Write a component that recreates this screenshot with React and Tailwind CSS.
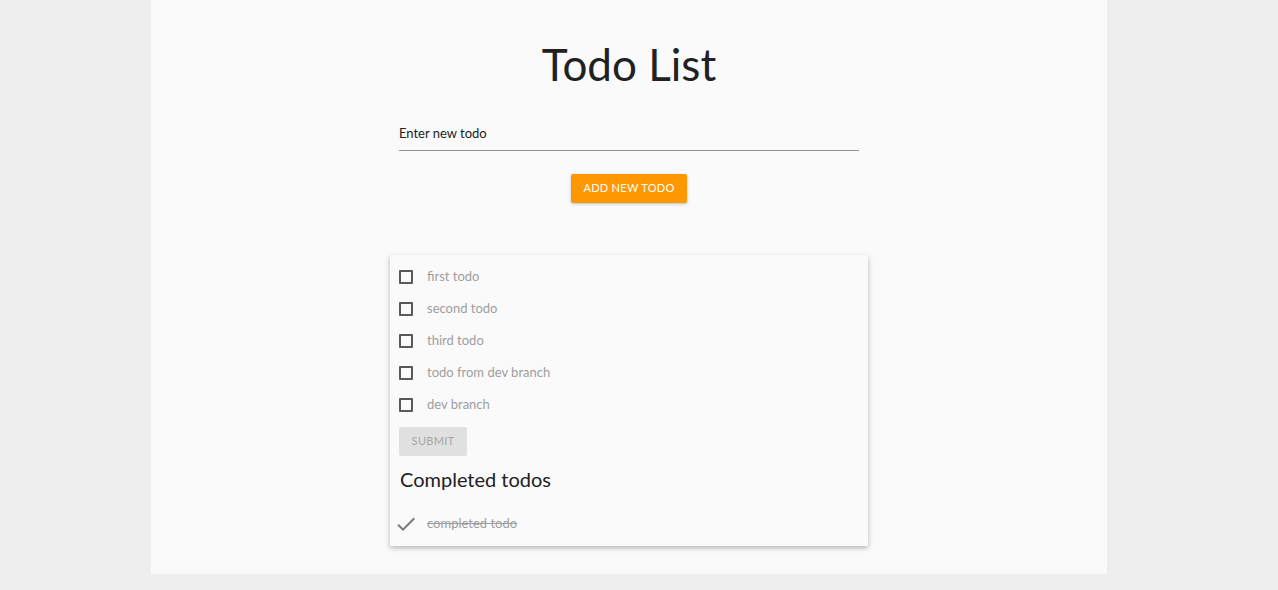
const todos = ['first todo', 'second todo', 'third todo', 'todo from dev branch', 'dev branch']

function Box() {
  return <span className="block w-[14px] h-[14px] border-2 border-[#595959] rounded-[1px] shrink-0" />
}

function DoneIcon() {
  return (
    <svg viewBox="0 0 24 24" className="w-[24px] h-[24px] -ml-[5px] shrink-0" fill="#7a7a7a">
      <path d="M9 16.17L4.83 12l-1.42 1.41L9 19 21 7l-1.41-1.41z" />
    </svg>
  )
}

export default function App() {
  return (
    <div className="h-[590px] bg-[#eeeeee] font-['Lato','Open_Sans',sans-serif] overflow-hidden">
      <div className="ml-[151px] w-[956px] h-[574px] bg-[#fafafa] flex flex-col items-center pt-[36px]">
        <h1 className="text-[44px] leading-[56px] text-[#212121] font-normal">Todo List</h1>

        {/* new todo input */}
        <div className="w-[460px] mt-[33px] border-b border-[#949494] pb-[9px]">
          <span className="text-[13px] text-[#212121] leading-[16px] block">Enter new todo</span>
        </div>
        <button className="mt-[23px] h-[29px] px-[12px] bg-[#ff9800] text-white text-[11px] tracking-[0.3px] uppercase rounded-[2px] shadow-[0_1px_3px_rgba(0,0,0,0.25)]">
          Add new todo
        </button>

        {/* todo card */}
        <div className="w-[478px] mt-[52px] bg-[#fafafa] shadow-[0_2px_5px_rgba(0,0,0,0.28)] pt-[6px] pb-[6px] px-[9px]">
          {todos.map(t => (
            <div key={t} className="h-[32px] flex items-center gap-[14px]">
              <Box />
              <span className="text-[13px] text-[#9e9e9e]">{t}</span>
            </div>
          ))}
          <button disabled className="mt-[6px] h-[29px] w-[68px] bg-[#e0e0e0] text-[#a6a6a6] text-[11px] uppercase tracking-[0.3px] rounded-[2px]">
            Submit
          </button>
          <div className="text-[20px] text-[#212121] mt-[10px] leading-[26px] pl-[1px]">Completed todos</div>
          <div className="h-[32px] mt-[16px] flex items-center gap-[9px]">
            <DoneIcon />
            <span className="text-[13px] text-[#9e9e9e] line-through">completed todo</span>
          </div>
        </div>
      </div>
    </div>
  )
}
